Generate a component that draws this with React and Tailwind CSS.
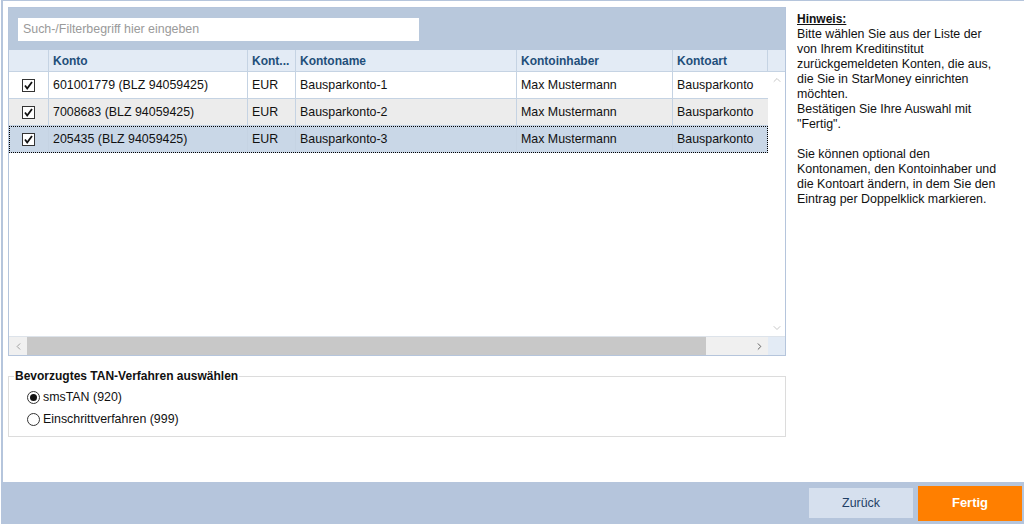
import { ChevronUp, ChevronDown, ChevronLeft, ChevronRight } from "lucide-react";

const columns = [
  { label: "", width: "w-[40px]" },
  { label: "Konto", width: "w-[199px]" },
  { label: "Kont...", width: "w-[48px]" },
  { label: "Kontoname", width: "w-[221px]" },
  { label: "Kontoinhaber", width: "w-[156px]" },
  { label: "Kontoart", width: "w-[95px]" },
];

const rows = [
  { konto: "601001779 (BLZ 94059425)", name: "Bausparkonto-1", bg: "bg-white" },
  { konto: "7008683 (BLZ 94059425)", name: "Bausparkonto-2", bg: "bg-[#ececec]" },
  { konto: "205435 (BLZ 94059425)", name: "Bausparkonto-3", bg: "bg-[#c9d7e7]", selected: true },
];

function Checkbox() {
  return (
    <svg width="13" height="13" viewBox="0 0 13 13">
      <rect x="0.5" y="0.5" width="12" height="12" fill="#fff" stroke="#333" />
      <path d="M3 6.5 L5.2 9.5 L10 3" fill="none" stroke="#111" strokeWidth="1.8" />
    </svg>
  );
}

function Radio({ checked }) {
  return (
    <span className="w-[13px] h-[13px] rounded-full border border-[#333] bg-white flex items-center justify-center">
      {checked && <span className="w-[7px] h-[7px] rounded-full bg-[#111]" />}
    </span>
  );
}

function AccountRow({ row }) {
  const cell = "h-full flex items-center px-[4px] border-r border-[#c5d3e3] shrink-0";
  return (
    <div
      className={`h-[27px] flex text-[12.4px] text-[#111] ${row.bg} ${
        row.selected ? "outline outline-1 outline-dotted outline-black -outline-offset-1" : "border-b border-[#c5d3e3]"
      }`}
    >
      <div className={`${cell} w-[40px] justify-center`}>
        <Checkbox />
      </div>
      <div className={`${cell} w-[199px]`}>{row.konto}</div>
      <div className={`${cell} w-[48px]`}>EUR</div>
      <div className={`${cell} w-[221px]`}>{row.name}</div>
      <div className={`${cell} w-[156px]`}>Max Mustermann</div>
      <div className={`${cell} w-[95px] border-r-0`}>Bausparkonto</div>
    </div>
  );
}

export default function App() {
  return (
    <div
      className="w-[1024px] h-[524px] bg-white flex flex-col overflow-hidden"
      style={{ fontFamily: '"Liberation Sans", Arial, sans-serif' }}
    >
      <div className="flex-1 ml-px border-l-2 border-t border-[#b5c5dc] flex pt-[6px] pl-[5px]">
        {/* left column */}
        <div className="w-[778px] flex flex-col">
          <div className="h-[349px] border border-[#b5c5dc] flex flex-col">
            <div className="h-[42px] bg-[#b8c8dc] pl-[9px] pt-[10px]">
              <div className="w-[401px] h-[23px] bg-white flex items-center px-[5px] text-[12.4px] text-[#9a9a9a]">
                Such-/Filterbegriff hier eingeben
              </div>
            </div>
            <div className="h-[22px] bg-[#e3ebf5] flex border-b border-[#c5d3e3] text-[12px] font-bold text-[#1f4f7a]">
              {columns.map((c, i) => (
                <div key={i} className={`${c.width} shrink-0 h-full flex items-center px-[4px] border-r border-[#c5d3e3]`}>
                  {c.label}
                </div>
              ))}
              <div className="flex-1" />
            </div>
            <div className="flex-1 flex min-h-0">
              <div className="w-[759px] flex flex-col">
                {rows.map((r, i) => (
                  <AccountRow key={i} row={r} />
                ))}
              </div>
              <div className="flex-1 flex flex-col items-center justify-between py-[2px] bg-white">
                <ChevronUp size={12} color="#c8c8c8" />
                <ChevronDown size={12} color="#c8c8c8" />
              </div>
            </div>
            <div className="h-[19px] flex border-t border-[#dde3ea]">
              <div className="w-[18px] bg-[#f0f0f0] flex items-center justify-center">
                <ChevronLeft size={11} color="#999" />
              </div>
              <div className="w-[679px] bg-[#c8c8c8]" />
              <div className="w-[45px] bg-[#f0f0f0]" />
              <div className="w-[17px] bg-[#f0f0f0] flex items-center justify-center">
                <ChevronRight size={11} color="#555" />
              </div>
              <div className="flex-1 bg-[#e3ebf5]" />
            </div>
          </div>

          <fieldset className="mt-[11px] h-[70px] border border-[#dcdcdc] px-[6px]">
            <legend className="text-[12px] font-bold text-[#111] px-[1px] ml-[-1px]">
              Bevorzugtes TAN-Verfahren auswählen
            </legend>
            <div className="flex flex-col pl-[12px] pt-[1px] text-[12.4px] text-[#111]">
              <div className="h-[22px] flex items-center gap-[3px]">
                <Radio checked />
                smsTAN (920)
              </div>
              <div className="h-[22px] flex items-center gap-[3px]">
                <Radio />
                Einschrittverfahren (999)
              </div>
            </div>
          </fieldset>
        </div>

        {/* hint */}
        <div className="ml-[11px] pt-[5px] w-[224px] text-[12.4px] leading-[15px] text-[#111]">
          <div className="font-bold underline text-[12px]">Hinweis:</div>
          <div>
            Bitte wählen Sie aus der Liste der
            <br />
            von Ihrem Kreditinstitut
            <br />
            zurückgemeldeten Konten, die aus,
            <br />
            die Sie in StarMoney einrichten
            <br />
            möchten.
            <br />
            Bestätigen Sie Ihre Auswahl mit
            <br />
            "Fertig".
          </div>
          <div className="mt-[15px]">
            Sie können optional den
            <br />
            Kontonamen, den Kontoinhaber und
            <br />
            die Kontoart ändern, in dem Sie den
            <br />
            Eintrag per Doppelklick markieren.
          </div>
        </div>
      </div>

      {/* footer */}
      <div className="h-[42px] ml-px bg-[#b5c5dc] flex items-center justify-end pr-[2px] gap-[5px]">
        <button className="w-[104px] h-[30px] bg-[#d6e0ee] text-[12.4px] text-[#1f3f66]">Zurück</button>
        <button className="w-[104px] h-[35px] bg-[#ff7f00] text-[13px] font-bold text-white">Fertig</button>
      </div>
    </div>
  );
}
